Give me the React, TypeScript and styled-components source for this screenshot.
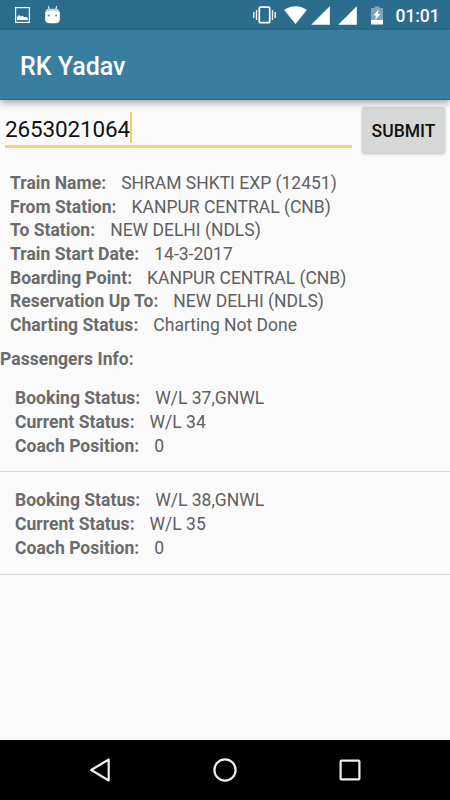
import React from 'react';
import styled, { createGlobalStyle } from 'styled-components';

const GlobalStyle = createGlobalStyle`
  * { box-sizing: border-box; }
  body { margin: 0; font-family: Roboto, sans-serif; background: #fafafa; }
`;

const Screen = styled.div`
  display: flex;
  flex-direction: column;
  width: 450px;
  height: 800px;
  overflow: hidden;
  background: #fafafa;
`;

const StatusBar = styled.header`
  display: flex;
  flex: none;
  align-items: center;
  justify-content: space-between;
  height: 30px;
  padding: 0 10.5px 0 15px;
  background: #2c6c8d;
  color: #fff;
`;

const IconGroup = styled.div<{ $gap: number }>`
  display: flex;
  align-items: center;
  gap: ${({ $gap }) => $gap}px;
  svg { display: block; flex: none; }
`;

const BatterySlot = styled.span`
  display: flex;
  margin-left: 6px;
`;

const Clock = styled.time`
  width: 44px;
  height: 30px;
  margin-left: 5px;
  font-size: 17.5px;
  line-height: 32px;
  font-weight: 500;
  letter-spacing: -0.1px;
  white-space: nowrap;
  text-align: right;
`;

const AppBar = styled.div`
  display: flex;
  flex: none;
  align-items: center;
  height: 70px;
  padding: 4px 20px 0;
  background: #387ea1;
  border-bottom: 1px solid #116f98;
  box-shadow: 0 3px 7px rgba(0, 0, 0, 0.32);
  z-index: 1;
`;

const Title = styled.h1`
  margin: 0;
  color: #fff;
  font-size: 25px;
  font-weight: 500;
`;

const Form = styled.div`
  display: flex;
  flex: none;
  align-items: flex-start;
  justify-content: space-between;
  height: 60px;
  padding: 7px 5px 0;
`;

const Field = styled.div`
  display: flex;
  align-items: center;
  width: 347px;
  height: 41px;
  padding-top: 6px;
  border-bottom: 3px solid #f4d37c;
  color: #111;
  font-size: 22.5px;
  letter-spacing: -0.15px;
  line-height: 32px;
`;

const Caret = styled.span`
  width: 2.5px;
  height: 31px;
  margin-bottom: 4px;
  background: #f3cd6c;
`;

const Submit = styled.button`
  width: 83px;
  height: 46px;
  padding: 1px 0 0;
  border: 0;
  border-radius: 2.5px;
  background: #d6d8d7;
  box-shadow: 0 1px 3px rgba(0, 0, 0, 0.25);
  color: #111;
  font: 500 17.5px Roboto, sans-serif;
`;

const Details = styled.dl<{ $inset: number }>`
  flex: none;
  margin: 0;
  padding: 11px ${({ $inset }) => $inset}px 0;
`;

const Passenger = styled.section<{ $height: number }>`
  flex: none;
  height: ${({ $height }) => $height}px;
  padding-top: 5px;
  border-bottom: 1px solid #d8d8d8;
`;

const Row = styled.div`
  display: flex;
  gap: 15px;
  height: 23.7px;
  font-size: 17.5px;
  line-height: 24px;
  white-space: nowrap;
`;

const Label = styled.dt`
  color: #6b6b6b;
  font-weight: 700;
  letter-spacing: 0.03px;
`;

const Value = styled.dd`
  margin: 0;
  color: #606060;
  font-weight: 400;
`;

const SectionTitle = styled.h2`
  flex: none;
  height: 23px;
  margin: 10.4px 0 0;
  color: #6b6b6b;
  font-size: 17.5px;
  line-height: 24px;
  font-weight: 700;
  letter-spacing: 0.045px;
`;

const NavBar = styled.nav`
  display: flex;
  flex: none;
  align-items: center;
  justify-content: space-between;
  height: 60px;
  margin-top: auto;
  padding: 0 88px;
  background: #000;
  svg { display: block; }
`;

const PictureIcon = () => (
  <svg width="15" height="16" viewBox="0 0 15 16">
    <rect x="0.6" y="0.6" width="13.8" height="14.8" fill="none" stroke="#fff" strokeWidth="1.2" />
    <path d="M2 13v-3l2-2 1.800 1.500 1.700-.8 2 1.600 1.600-.5 1.900 1.700V13z" fill="#fff" />
  </svg>
);

const RobotIcon = () => (
  <svg width="15" height="18" viewBox="0 0 15 18">
    <path d="M3.3.2l.8 3M11.7.2l-.8 3" stroke="#dce8ee" strokeWidth="1.2" />
    <path d="M.4 6.200C.8 3.800 2 2.800 4 2.800h7c2 0 3.200 1 3.600 3.400z" fill="#c3d7e0" />
    <path d="M.2 6Q7.500 4 14.800 6v7q0 4.300-4.300 4.300h-6Q.2 17.300.2 13z" fill="#fff" />
    <circle cx="3.8" cy="9.6" r="1" fill="#5d8da5" />
    <circle cx="11.2" cy="9.6" r="1" fill="#5d8da5" />
  </svg>
);

const VibrateIcon = () => (
  <svg width="23" height="18" viewBox="0 0 23 18">
    <rect x="6.3" y="1.1" width="10.4" height="15.6" rx="1" fill="none" stroke="#fff" strokeWidth="1.7" />
    <path d="M3.5 4v10M.8 6v6M19.5 4v10M22.2 6v6" stroke="#fff" strokeWidth="1.3" />
  </svg>
);

const WifiIcon = () => (
  <svg width="23" height="18" viewBox="0 0 23 18">
    <path d="M.2 4.1C6.5-1.2 16.5-1.2 22.8 4.1L11.5 18z" fill="#fff" />
  </svg>
);

const SignalIcon = () => (
  <svg width="19" height="19" viewBox="0 0 19 19">
    <path d="M18.8.2v18.6H.2z" fill="#fff" />
  </svg>
);

const BatteryIcon = () => (
  <svg width="12" height="19" viewBox="0 0 12 19">
    <path d="M0 2h3.5V.5h5V2H12v12H0z" fill="#7fa5b8" />
    <path d="M0 14h12v4.5H0z" fill="#fff" />
    <path d="M7.5 3.5L2.5 9.5H5L4.2 14 9.5 8H7z" fill="#fff" />
  </svg>
);

const BackIcon = () => (
  <svg width="24" height="26" viewBox="0 0 24 26">
    <path d="M20.7 2.5v21L3.2 13z" fill="none" stroke="#eee" strokeWidth="2.2" strokeLinejoin="round" />
  </svg>
);

const HomeIcon = () => (
  <svg width="24" height="24" viewBox="0 0 24 24">
    <circle cx="12" cy="12" r="10.6" fill="none" stroke="#eee" strokeWidth="2.2" />
  </svg>
);

const RecentIcon = () => (
  <svg width="24" height="24" viewBox="0 0 24 24">
    <rect x="2.6" y="2.6" width="18.8" height="18.8" rx="0.8" fill="none" stroke="#eee" strokeWidth="2.2" />
  </svg>
);

type Entry = [string, string];

const train: Entry[] = [
  ['Train Name:', 'SHRAM SHKTI EXP (12451)'],
  ['From Station:', 'KANPUR CENTRAL (CNB)'],
  ['To Station:', 'NEW DELHI (NDLS)'],
  ['Train Start Date:', '14-3-2017'],
  ['Boarding Point:', 'KANPUR CENTRAL (CNB)'],
  ['Reservation Up To:', 'NEW DELHI (NDLS)'],
  ['Charting Status:', 'Charting Not Done'],
];

const passengers = [
  { booking: 'W/L 37,GNWL', current: 'W/L 34', coach: '0', height: 102 },
  { booking: 'W/L 38,GNWL', current: 'W/L 35', coach: '0', height: 103 },
];

const DetailRows = ({ entries }: { entries: Entry[] }) => (
  <>
    {entries.map(([label, value]) => (
      <Row key={label}>
        <Label>{label}</Label>
        <Value>{value}</Value>
      </Row>
    ))}
  </>
);

export default function App() {
  return (
    <Screen>
      <GlobalStyle />
      <StatusBar>
        <IconGroup $gap={15}>
          <PictureIcon />
          <RobotIcon />
        </IconGroup>
        <IconGroup $gap={8}>
          <VibrateIcon />
          <IconGroup $gap={4}>
            <WifiIcon />
            <SignalIcon />
          </IconGroup>
          <SignalIcon />
          <BatterySlot>
            <BatteryIcon />
          </BatterySlot>
          <Clock>01:01</Clock>
        </IconGroup>
      </StatusBar>
      <AppBar>
        <Title>RK Yadav</Title>
      </AppBar>
      <Form>
        <Field>
          2653021064
          <Caret />
        </Field>
        <Submit>SUBMIT</Submit>
      </Form>
      <Details $inset={10}>
        <DetailRows entries={train} />
      </Details>
      <SectionTitle>Passengers Info:</SectionTitle>
      {passengers.map((p) => (
        <Passenger key={p.booking} $height={p.height}>
          <Details $inset={15}>
            <DetailRows
              entries={[
                ['Booking Status:', p.booking],
                ['Current Status:', p.current],
                ['Coach Position:', p.coach],
              ]}
            />
          </Details>
        </Passenger>
      ))}
      <NavBar>
        <BackIcon />
        <HomeIcon />
        <RecentIcon />
      </NavBar>
    </Screen>
  );
}
